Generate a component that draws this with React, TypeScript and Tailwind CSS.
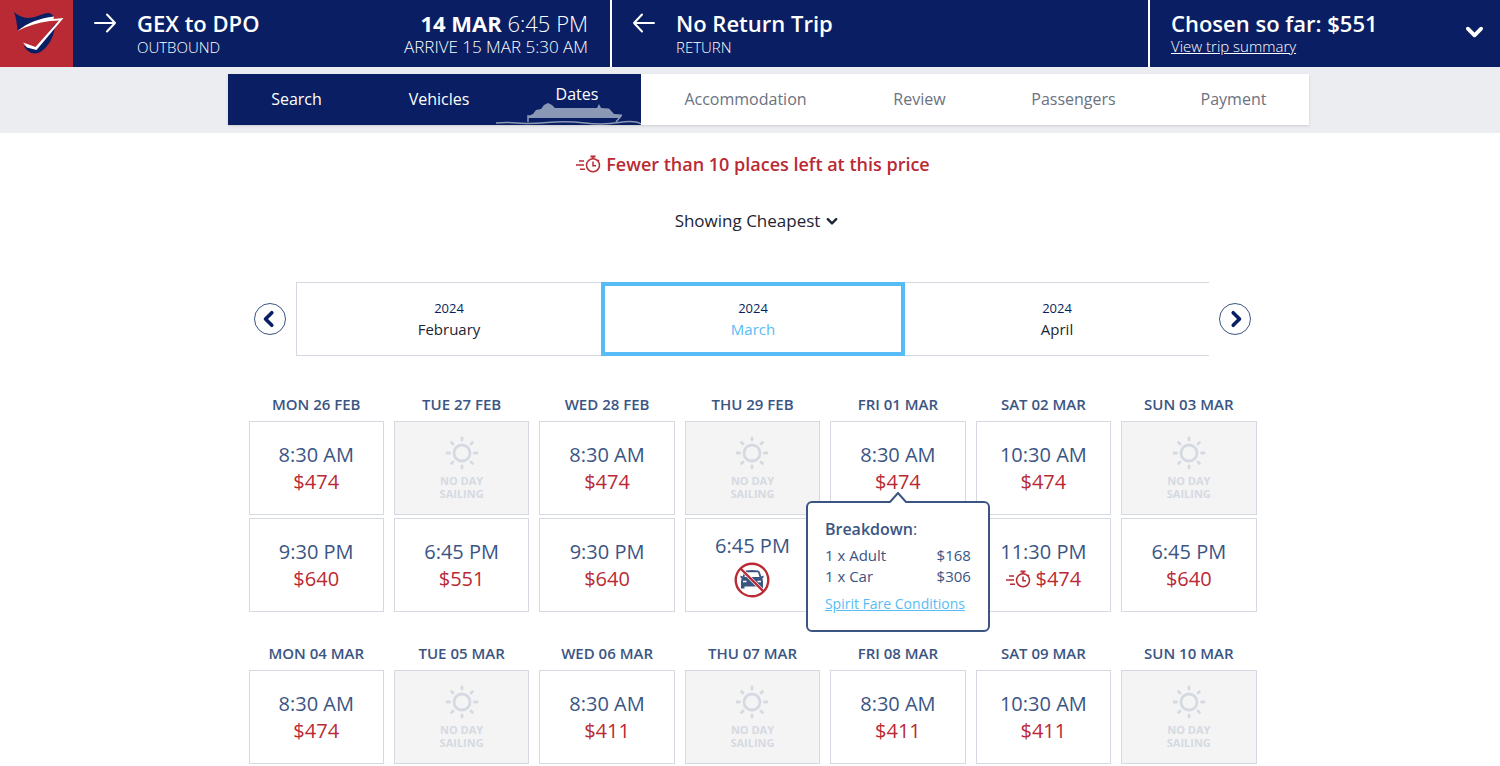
type Sailing =
  | { kind: "fare"; time: string; price: string; limited?: boolean; breakdown?: boolean }
  | { kind: "noCars"; time: string }
  | { kind: "none" };

type Day = { label: string; sailings: Sailing[] };

const fare = (time: string, price: string): Sailing => ({ kind: "fare", time, price });
const none: Sailing = { kind: "none" };

const weeks: Day[][] = [
  [
    { label: "MON 26 FEB", sailings: [fare("8:30 AM", "$474"), fare("9:30 PM", "$640")] },
    { label: "TUE 27 FEB", sailings: [none, fare("6:45 PM", "$551")] },
    { label: "WED 28 FEB", sailings: [fare("8:30 AM", "$474"), fare("9:30 PM", "$640")] },
    { label: "THU 29 FEB", sailings: [none, { kind: "noCars", time: "6:45 PM" }] },
    {
      label: "FRI 01 MAR",
      sailings: [{ kind: "fare", time: "8:30 AM", price: "$474", breakdown: true }],
    },
    {
      label: "SAT 02 MAR",
      sailings: [
        fare("10:30 AM", "$474"),
        { kind: "fare", time: "11:30 PM", price: "$474", limited: true },
      ],
    },
    { label: "SUN 03 MAR", sailings: [none, fare("6:45 PM", "$640")] },
  ],
  [
    { label: "MON 04 MAR", sailings: [fare("8:30 AM", "$474")] },
    { label: "TUE 05 MAR", sailings: [none] },
    { label: "WED 06 MAR", sailings: [fare("8:30 AM", "$411")] },
    { label: "THU 07 MAR", sailings: [none] },
    { label: "FRI 08 MAR", sailings: [fare("8:30 AM", "$411")] },
    { label: "SAT 09 MAR", sailings: [fare("10:30 AM", "$411")] },
    { label: "SUN 10 MAR", sailings: [none] },
  ],
];

const steps = ["Search", "Vehicles", "Dates", "Accommodation", "Review", "Passengers", "Payment"];
const currentStep = 2;

const months = ["February", "March", "April"];

function Logo() {
  return (
    <svg viewBox="0 0 73 67" className="h-[67px] w-[73px] bg-[#b92a34]" aria-hidden="true">
      <g fill="#0a1f63">
        <path d="M14 12C19 16.500 25 19 32 17.500C39 16 44 13 48 13C51 13 53 15 54 17.500C40 20 28 24 17.500 30.500C17 24 16 17 14 12Z" />
        <path d="M55 24C55 32 52 40 47 46C43 51 39 53.500 35 53.500C30 53.500 26 50 24 46L36 49Z" />
      </g>
      <path
        d="M17.500 31C27 23 40 18 54 16.500L53.500 19L63.500 18L36.500 50L27 47.500L23 42.500L35.500 47L59 20.500L50 21C38 22.500 27 26 17.500 31Z"
        fill="#fff"
      />
    </svg>
  );
}

function Arrow({ back = false }: { back?: boolean }) {
  return (
    <svg viewBox="0 0 24 20" className="mt-[13px] h-5 w-6 shrink-0" fill="none" stroke="#fff" strokeWidth="2" strokeLinecap="round" strokeLinejoin="round" aria-hidden="true">
      <path d={back ? "M22 10H2M10 1.500L2 10L10 18.500" : "M2 10H22M14 1.500L22 10L14 18.500"} />
    </svg>
  );
}

function Ship() {
  return (
    <svg viewBox="0 0 146 24" className="absolute right-0 bottom-0 h-6 w-[146px]" aria-hidden="true">
      <path
        d="M33 15L38 13L41 9L46 8L49 4L53 2L57 4L60 7H102L104 3L106 7L114 7.500L119 13L127 13.500V15L124 17H33Z"
        fill="#8b98b5"
      />
      <path d="M33 14V21M126 15L121 21" fill="none" stroke="#8b98b5" strokeWidth="1.500" />
      <path d="M1 22Q12 21 22 22T52 21.500T90 22T124 21.500T146 23" fill="none" stroke="#8b98b5" strokeWidth="1.500" />
    </svg>
  );
}

function Stopwatch() {
  return (
    <svg viewBox="0 0 26 18" className="h-[18px] w-[26px] shrink-0" fill="none" stroke="currentColor" strokeWidth="1.500" aria-hidden="true">
      <circle cx="18" cy="10.300" r="6.500" />
      <path d="M18 4V1.500M18 6.500V10.800H21M22.500 4.800L24 6.200M4 6H9M1 10H9M5 14.300H10" />
      <path d="M15.500 1.500H20.500" strokeWidth="2" />
    </svg>
  );
}

function Sun() {
  return (
    <svg viewBox="0 0 34 34" className="size-[34px]" fill="none" stroke="currentColor" strokeWidth="2.800" strokeLinecap="round" aria-hidden="true">
      <circle cx="17" cy="17" r="8" />
      <path d="M17 2V4M17 30V32M2 17H4.500M29.500 17H32M6.500 6.500L8 8M26 26L27.500 27.500M27.500 6.500L26 8M8 26L6.500 27.500" />
    </svg>
  );
}

function NoCars() {
  return (
    <svg viewBox="0 0 36 36" className="size-9" role="img" aria-label="No vehicle space">
      <path
        d="M12 8.500Q18 7.500 24 8.500Q25.500 9 26 10.500L27.300 14.500L29.500 13.500V15.500L28.300 16.500Q29 18 29 20V26.500H25.500V24.500H10.500V26.500H7V20Q7 18 7.700 16.500L6.500 15.500V13.500L8.700 14.500L10 10.500Q10.500 9 12 8.500Z"
        fill="#3b5583"
      />
      <path d="M12 10.200H24L25.500 15H10.500Z" fill="#fff" />
      <path d="M9 19.500H12.500M23.500 19.500H27" stroke="#fff" strokeWidth="1.500" />
      <path d="M7 7L29 29" stroke="#fff" strokeWidth="3.500" />
      <g fill="none" stroke="#b92a34" strokeWidth="2.400">
        <circle cx="18" cy="18" r="16.300" />
        <path d="M6.500 6.500L29.500 29.500" />
      </g>
    </svg>
  );
}

function Chevron({ d, className }: { d: string; className: string }) {
  return (
    <svg viewBox="0 0 20 20" className={className} fill="none" stroke="currentColor" strokeWidth="4" strokeLinecap="round" strokeLinejoin="round" aria-hidden="true">
      <path d={d} />
    </svg>
  );
}

const DOWN = "M3 7L10 14L17 7";
const LEFT = "M12 3L5 10L12 17";
const RIGHT = "M8 3L15 10L8 17";

function Breakdown() {
  return (
    <div className="absolute top-20 left-1/2 z-10 w-[184px] -translate-x-1/2 rounded-md border-2 border-[#3b5583] bg-white px-[17px] py-4 text-[15px] leading-[21px] text-[#3b5583]">
      <svg viewBox="0 0 18 11" className="absolute -top-[11px] left-1/2 h-[11px] w-[18px] -translate-x-1/2" aria-hidden="true">
        <path d="M0 11L1 10L9 1L17 10L18 11Z" fill="#fff" />
        <path d="M0 10H1L9 1L17 10H18" fill="none" stroke="#3b5583" strokeWidth="2" />
      </svg>
      <p className="mb-[5px] text-base leading-[21px]">
        <strong className="font-semibold">Breakdown</strong>:
      </p>
      <dl className="grid grid-cols-[1fr_auto]">
        <dt>1 x Adult</dt>
        <dd className="text-right">$168</dd>
        <dt>1 x Car</dt>
        <dd className="text-right">$306</dd>
      </dl>
      <a href="#conditions" className="mt-[6px] block whitespace-nowrap text-sm leading-[21px] text-[#57bcf5] underline">
        Spirit Fare Conditions
      </a>
    </div>
  );
}

function SailingCell({ sailing }: { sailing: Sailing }) {
  if (sailing.kind === "none") {
    return (
      <div className="flex h-[94px] flex-col items-center border border-[#d5dae2] bg-[#f4f4f4] pt-[14px] text-[#d5dae2]">
        <Sun />
        <p className="mt-1 text-center text-[11px] leading-[13px] font-bold">
          NO DAY
          <br />
          SAILING
        </p>
      </div>
    );
  }

  if (sailing.kind === "noCars") {
    return (
      <button type="button" className="flex h-[94px] flex-col items-center border border-[#d5dae2] bg-white pt-[13px] text-xl leading-[27px] text-[#3b5583]">
        {sailing.time}
        <span className="mt-[3px]">
          <NoCars />
        </span>
      </button>
    );
  }

  return (
    <div className="relative">
      <button type="button" className="flex h-[94px] w-full flex-col items-center border border-[#d5dae2] bg-white pt-[19px] text-xl leading-[27px] text-[#3b5583]">
        <span>{sailing.time}</span>
        <span className="flex items-center gap-1 text-[#b92a34]">
          {sailing.limited && <Stopwatch />}
          {sailing.price}
        </span>
      </button>
      {sailing.breakdown && <Breakdown />}
    </div>
  );
}

function stepStyle(i: number) {
  if (i < currentStep) return "bg-[#0a1f63] text-center text-white";
  if (i === currentStep) return "relative bg-[#0a1f63] text-center leading-10 text-white";
  return "text-center text-[#6b7280]";
}

export default function App() {
  return (
    <div className="bg-white font-['Open_Sans','Noto_Sans',sans-serif] text-[#1d2433]">
      {/* Trip bar */}
      <header className="grid h-[67px] grid-cols-[73px_537fr_538fr_352fr] bg-[#0a1f63] text-white">
        <Logo />
        <section className="flex pr-[22px] pl-5">
          <Arrow />
          <div className="ml-5 pt-[9px]">
            <h2 className="text-[22px] leading-7 font-semibold">GEX to DPO</h2>
            <p className="text-[15px] leading-5 font-light">OUTBOUND</p>
          </div>
          <div className="ml-auto pt-[9px] text-right">
            <p className="text-[22px] leading-7 font-light">
              <strong className="font-bold">14 MAR</strong> 6:45 PM
            </p>
            <p className="text-[17px] leading-5 font-light">ARRIVE 15 MAR 5:30 AM</p>
          </div>
        </section>
        <section className="flex border-l-2 border-white pl-5">
          <Arrow back />
          <div className="ml-5 pt-[9px]">
            <h2 className="text-[22px] leading-7 font-semibold">No Return Trip</h2>
            <p className="text-[15px] leading-5 font-light">RETURN</p>
          </div>
        </section>
        <section className="flex items-start border-l-2 border-white pr-4 pl-[21px]">
          <div className="pt-[9px]">
            <h2 className="text-[22px] leading-7 font-semibold">Chosen so far: $551</h2>
            <a href="#summary" className="block text-[15px] leading-[18px] font-light underline">
              View trip summary
            </a>
          </div>
          <button type="button" aria-label="Show trip summary" className="mt-[22px] ml-auto">
            <Chevron d={DOWN} className="size-[19px]" />
          </button>
        </section>
      </header>

      {/* Booking steps */}
      <nav className="bg-[#ecedf1] pt-[7px] pb-2 pl-[37px]">
        <ol className="mx-auto grid h-[51px] max-w-[1081px] grid-cols-[137fr_148fr_128fr_209fr_139fr_169fr_151fr] bg-white text-base leading-[51px] shadow-sm">
          {steps.map((step, i) => (
            <li key={step} className={stepStyle(i)} aria-current={i === currentStep ? "step" : undefined}>
              {i < currentStep ? <a href="#step">{step}</a> : step}
              {i === currentStep && <Ship />}
            </li>
          ))}
        </ol>
      </nav>

      <main className="pl-[5px]">
        <p className="mt-[18px] flex items-center justify-center gap-[5px] text-lg leading-[26px] font-semibold text-[#b92a34]">
          <Stopwatch />
          Fewer than 10 places left at this price
        </p>

        <button type="button" className="mx-auto mt-[31px] flex items-center gap-[6px] pl-2 text-[17px] leading-[26px]">
          Showing Cheapest
          <Chevron d={DOWN} className="size-3" />
        </button>

        {/* Month picker */}
        <div className="mx-auto mt-[48px] flex max-w-[997px] items-center gap-[10px]">
          <button type="button" aria-label="Previous month" className="grid size-8 shrink-0 place-items-center rounded-full border border-[#3b5583] text-[#0a1f63]">
            <Chevron d={LEFT} className="size-[18px]" />
          </button>
          <div className="grid h-[74px] grow grid-cols-3 border-y border-l border-[#d5dae2] text-center">
            {months.map((month) => (
              <button
                type="button"
                key={month}
                className={
                  month === "March"
                    ? "-my-px border-4 border-[#57bcf5] text-[#57bcf5]"
                    : "text-[#1d2433]"
                }
              >
                <span className="block text-[13px] leading-5 text-[#0a1f63]">2024</span>
                <span className="block text-[15px] leading-[22px]">{month}</span>
              </button>
            ))}
          </div>
          <button type="button" aria-label="Next month" className="grid size-8 shrink-0 place-items-center rounded-full border border-[#3b5583] text-[#0a1f63]">
            <Chevron d={RIGHT} className="size-[18px]" />
          </button>
        </div>

        {/* Sailings */}
        <div className="mx-auto mt-[38px] flex max-w-[1008px] flex-col gap-[31px]">
          {weeks.map((week) => (
            <div key={week[0].label} className="grid grid-cols-7 gap-x-[10px]">
              {week.map((day) => (
                <section key={day.label} className="flex flex-col gap-[3px]">
                  <h3 className="mb-1 text-center text-[15px] leading-5 font-semibold text-[#3b5583]">
                    {day.label}
                  </h3>
                  {day.sailings.map((sailing, i) => (
                    <SailingCell key={i} sailing={sailing} />
                  ))}
                </section>
              ))}
            </div>
          ))}
        </div>
      </main>
    </div>
  );
}
